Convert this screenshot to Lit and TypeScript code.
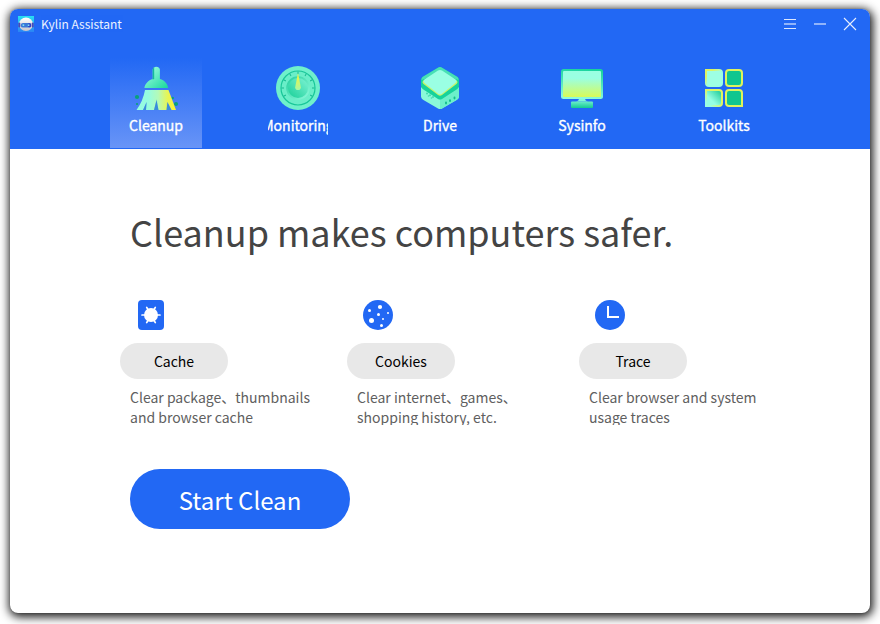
import { LitElement, html, css, svg } from "lit";
import { customElement, property } from "lit/decorators.js";

const logo = html`<svg width="16" height="16" viewBox="0 0 16 16">
  <defs><linearGradient id="lg" x1="0" y1="0" x2="0" y2="1"><stop offset="0" stop-color="#27e0f2"/><stop offset="1" stop-color="#2a83f5"/></linearGradient>
  <linearGradient id="lw" x1="0" y1="0" x2="0" y2="1"><stop offset="0" stop-color="#fff"/><stop offset="1" stop-color="#c9c5cb"/></linearGradient></defs>
  <rect width="16" height="16" fill="url(#lg)"/>
  <ellipse cx="8" cy="8.2" rx="7" ry="6.7" fill="url(#lw)"/>
  <rect x="0.3" y="6.5" width="2" height="5" rx="1" fill="#4a49b8"/><rect x="13.7" y="6.5" width="2" height="5" rx="1" fill="#4a49b8"/>
  <rect x="2.8" y="7" width="10.4" height="4.6" rx="2.2" fill="#3a78d8"/>
  <rect x="10" y="7.2" width="3" height="4" rx="1.200" fill="#2f3fc8"/>
  <rect x="4.6" y="8.4" width="1.600" height="1.600" fill="#7fe4f4"/><rect x="9.8" y="8.4" width="1.600" height="1.600" fill="#7fe4f4"/>
</svg>`;

const broom = html`<svg width="48" height="48" viewBox="0 0 48 48">
  <defs><linearGradient id="bh" x1="0" y1="0" x2="1" y2="1"><stop offset=".2" stop-color="#8ff9d8"/><stop offset="1" stop-color="#16d79d"/></linearGradient>
  <linearGradient id="bb" x1="0" y1="0" x2="1" y2="0"><stop offset=".3" stop-color="#95fce0"/><stop offset=".55" stop-color="#b4fab8"/><stop offset=".78" stop-color="#e5f557"/><stop offset="1" stop-color="#fdf02d"/></linearGradient></defs>
  <g fill="#08a17b"><circle cx="5" cy="33" r="2.1"/><circle cx="5" cy="40" r="1.1"/><circle cx="40.7" cy="34" r="1.2"/><circle cx="44" cy="40" r="2.1"/></g>
  <path d="M20.7 5.5a3.7 3.7 0 0 1 7.2 0V15c4.500 1 8 5 8.200 9H12.400c.4-4 4-8 8.300-9z" fill="url(#bh)"/>
  <path d="M20.7 5.500q.5-2 1.500-2.500v12l-1.500.5z" fill="#15b99c"/>
  <path d="M13 26H36.500L44 46H39.500L35.500 38L34.500 46H26.500L24.500 36L22 46H14L14.500 38L11 46H4.500Q11 37 13 26Z" fill="url(#bb)"/>
  <path d="M15 38L11 46H14zM24.700 35L22 46h4.500zM35 38l-.5 8h5z" fill="#18a99e" opacity=".3"/>
</svg>`;

const gauge = html`<svg width="48" height="48" viewBox="0 0 48 48">
  <defs><linearGradient id="gr" x1="0" y1="0" x2="1" y2="1"><stop stop-color="#23ce9c"/><stop offset="1" stop-color="#8ffbdc"/></linearGradient>
  <linearGradient id="gk" x1="1" y1="0" x2="0" y2="1"><stop offset=".1" stop-color="#74efcd"/><stop offset="1" stop-color="#18cf98"/></linearGradient>
  <linearGradient id="gn" x1="0" y1="0" x2="0" y2="1"><stop stop-color="#fff32c"/><stop offset="1" stop-color="#a8f8a5"/></linearGradient></defs>
  <circle cx="24" cy="24" r="22" fill="#6ff0cb"/>
  <circle cx="24" cy="24" r="17" fill="#6aeec8" stroke="#18c698" stroke-width="1.200"/>
  <g stroke="#18ba91" stroke-width="1">${Array.from({ length: 9 }, (_, i) => svg`<path d="M24 7.500v2.500" transform=${`rotate(${i * 30 - 120} 24 24)`}/>`)}</g>
  <circle cx="24" cy="24" r="11.800" fill="url(#gr)"/>
  <circle cx="24" cy="24" r="10" fill="url(#gk)"/>
  <path d="M24 9L21.200 23.300a2.800 2.800 0 1 0 5.600 0z" fill="url(#gn)"/>
</svg>`;

const drive = html`<svg width="48" height="48" viewBox="0 0 48 48">
  <path d="M5 23L24 30L43 23V32.500Q43 34.500 41 35.700L26 44.500Q24 45.500 22 44.500L7 35.700Q5 34.500 5 32.500Z" fill="#8af9d9"/>
  <path d="M24 32L43 23V32.500Q43 34.500 41 35.700L26 44.500Q25 45 24 45Z" fill="#6cf0ca"/>
  <path d="M22 3.700Q24 2.500 26 3.700L41.500 13Q43 14 43 16V22Q43 24 41 25.200L26 35Q24 36.200 22 35L7 25.200Q5 24 5 22V16Q5 14 6.500 13Z" fill="#16d29b"/>
  <path d="M22 3.700Q24 2.500 26 3.700L41.500 13Q42.500 14 42.500 16L24 10L5.500 16Q5.500 14 6.500 13Z" fill="#48e0b5"/>
  <path d="M22 8Q24 6.500 26 8L40.500 16.500Q42.500 18 40.500 20L26 31Q24 32.500 22 31L7.500 20Q5.500 18 7.500 16.500Z" fill="#c8f36b"/>
  <path d="M22 6.500Q24 5.500 26 6.500L39.500 15.500Q41.500 17 39.500 19L26 29.700Q24 31.200 22 29.700L8.500 19Q6.500 17 8.500 15.500Z" fill="#9affe3"/>
  <g fill="#13bd8d"><ellipse cx="30" cy="39" rx="1" ry="1.400"/><ellipse cx="34" cy="36.700" rx="1" ry="1.400"/><ellipse cx="38.500" cy="34" rx="1" ry="1.400"/></g>
  <g fill="#25cd9c" opacity=".7"><circle cx="11" cy="29.500" r="1"/><circle cx="14" cy="31.300" r="1"/><circle cx="17" cy="33" r="1"/><circle cx="12.500" cy="32" r=".8"/><circle cx="15.500" cy="34" r=".8"/></g>
</svg>`;

const monitor = html`<svg width="48" height="48" viewBox="0 0 48 48">
  <defs><linearGradient id="ms" x1="0" y1="0" x2="0" y2="1"><stop offset=".28" stop-color="#9affe2"/><stop offset="1" stop-color="#d9fb57"/></linearGradient>
  <linearGradient id="mf" x1=".7" y1="0" x2=".55" y2="1"><stop stop-color="#16d39c"/><stop offset="1" stop-color="#8dfbdd"/></linearGradient>
  <linearGradient id="mb" x1="0" y1="0" x2="0" y2="1"><stop stop-color="#6bedcb"/><stop offset="1" stop-color="#14c992"/></linearGradient></defs>
  <path d="M21 34h6q0 3 3 3.500H18q3-.5 3-3.500z" fill="#83f5d9"/>
  <rect x="3" y="5" width="42" height="30" rx="2.500" fill="url(#mf)"/>
  <rect x="5" y="7" width="38" height="26" rx="1" fill="url(#ms)"/>
  <rect x="13" y="37.500" width="22" height="6.500" rx="1" fill="url(#mb)"/>
</svg>`;

const tiles = html`<svg width="48" height="48" viewBox="0 0 48 48">
  <defs><linearGradient id="tg" x1="0" y1="1" x2="1" y2="0"><stop offset=".35" stop-color="#95ffe2"/><stop offset="1" stop-color="#12c690"/></linearGradient>
  <linearGradient id="ty" x1="0" y1="0" x2="1" y2="1"><stop offset=".2" stop-color="#dff462"/><stop offset=".55" stop-color="#9dffdf"/></linearGradient>
  <linearGradient id="tz" x1="0" y1="1" x2=".65" y2=".35"><stop offset=".2" stop-color="#9dffdf"/><stop offset=".8" stop-color="#dff462"/></linearGradient></defs>
  <g stroke-width="2">
  <path d="M6 6H19Q22 6 22 9V19Q22 22 19 22H9Q6 22 6 19Z" fill="#9dffe3" stroke="url(#ty)"/>
  <path d="M29 6H39Q42 6 42 9V19Q42 22 39 22H29Q26 22 26 19V9Q26 6 29 6Z" fill="#10c68f" stroke="#dff35c"/>
  <path d="M6 26H19Q22 26 22 29V39Q22 42 19 42H6Z" fill="url(#tg)" stroke="url(#tz)"/>
  <path d="M29 26H39Q42 26 42 29V42H29Q26 42 26 39V29Q26 26 29 26Z" fill="#10c68f" stroke="#dff35c"/>
  </g>
</svg>`;

const cacheIcon = html`<svg width="26" height="30" viewBox="0 0 26 30"><rect width="26" height="30" rx="4" fill="#2268f4"/>
  <circle cx="13" cy="15" r="7" fill="#fff"/>
  <g stroke="#fff" stroke-width="1.700" stroke-linecap="round"><path d="M4 15H22M8.700 7.400L17.300 22.600M17.300 7.400L8.700 22.600"/></g></svg>`;

const cookieIcon = html`<svg width="30" height="30" viewBox="0 0 30 30"><circle cx="15" cy="15" r="15" fill="#2268f4"/>
  <g fill="#fff"><circle cx="17" cy="7" r="2.100"/><circle cx="6.500" cy="10.500" r="1.500"/><circle cx="15.500" cy="14.500" r="1.500"/><circle cx="25" cy="13" r="1"/><circle cx="8.500" cy="20.500" r="2.500"/><circle cx="20" cy="19" r="1"/><circle cx="18.500" cy="25.500" r="1.500"/></g></svg>`;

const traceIcon = html`<svg width="30" height="30" viewBox="0 0 30 30"><circle cx="15" cy="15" r="15" fill="#2268f4"/>
  <path d="M13 6V17H24" fill="none" stroke="#fff" stroke-width="2"/></svg>`;

@customElement("nav-tab")
export class NavTab extends LitElement {
  @property() label = "";
  @property({ attribute: false }) icon: unknown;
  static styles = css`
    :host { display: flex; flex-direction: column; align-items: center; width: 92px; height: 90px; padding-top: 6px; box-sizing: border-box; }
    :host([active]) { background: linear-gradient(#2268f4, #6894f7); }
    svg { display: block; }
    .label { width: 60px; height: 24px; margin-top: 1px; overflow: hidden; display: flex; justify-content: center; font-size: 14px; line-height: 24px; font-weight: 400; color: #fff; -webkit-text-stroke: 0.35px #fff; white-space: nowrap; }
  `;
  render() {
    return html`${this.icon}<div class="label"><span>${this.label}</span></div>`;
  }
}

@customElement("clean-item")
export class CleanItem extends LitElement {
  @property() label = "";
  @property({ attribute: false }) lines: string[] = [];
  @property({ attribute: false }) icon: unknown;
  static styles = css`
    :host { display: block; }
    .icon { display: flex; height: 30px; padding-left: 16px; }
    :host([narrow]) .icon { padding-left: 18px; }
    button { display: block; width: 108px; height: 36px; margin-top: 13px; padding: 1px 0 0; border: 0; border-radius: 18px; background: #e8e8e8; color: #000; font: 400 14px/35px "Noto Sans CJK SC", sans-serif; }
    .text { height: 38px; margin: 8px 0 0 10px; overflow: hidden; font-size: 14px; line-height: 20px; color: #606060; white-space: nowrap; }
  `;
  render() {
    return html`<div class="icon">${this.icon}</div>
      <button>${this.label}</button>
      <div class="text">${this.lines.map((l) => html`<div>${l}</div>`)}</div>`;
  }
}

@customElement("app-root")
export class AppRoot extends LitElement {
  static styles = css`
    :host { display: block; box-sizing: border-box; width: 880px; height: 624px; padding: 9px 10px 10px; overflow: hidden; background: #fff; font-family: "Noto Sans CJK SC", sans-serif; }
    .window { height: 604px; box-sizing: border-box; border-radius: 8px; background: #fff; overflow: hidden; box-shadow: 0 0 1px 0 rgba(0, 0, 0, 0.4), 1px 2px 10px 2px rgba(0, 0, 0, 0.9); }
    header { height: 140px; background: #2268f4; }
    .bar { display: flex; align-items: center; height: 30px; padding: 0 13px 0 8px; }
    .title { flex: 1; margin-left: 7px; font-size: 12px; line-height: 30px; color: #fff; opacity: 0.92; }
    .controls { display: flex; gap: 16px; }
    nav { display: flex; gap: 50px; margin: 19px 0 0 100px; }
    h1 { margin: 52px 0 0 120px; font-size: 36px; line-height: 60px; font-weight: 400; color: #444; white-space: nowrap; }
    .items { display: grid; grid-template-columns: 227px 232px 200px; margin: 39px 0 0 110px; }
    .start { display: block; width: 220px; height: 60px; margin: 44px 0 0 120px; padding: 1px 0 0; border: 0; border-radius: 30px; background: #2268f4; color: #fff; font: 400 24px/59px "Noto Sans CJK SC", sans-serif; }
  `;
  render() {
    return html`<div class="window">
      <header>
        <div class="bar">
          ${logo}<span class="title">Kylin Assistant</span>
          <div class="controls">
            <svg width="14" height="14" viewBox="0 0 14 14"><path d="M1 2.500h12M1 11.500h12" stroke="#dde8fe"/><path d="M1 7h12" stroke="#91b4fa" stroke-width="2"/></svg>
            <svg width="14" height="14" viewBox="0 0 14 14"><path d="M1 7h12" stroke="#91b4fa" stroke-width="2"/></svg>
            <svg width="14" height="14" viewBox="0 0 14 14"><path d="M1 1l12 12M13 1L1 13" stroke="#e6eefe" stroke-width="1.100"/></svg>
          </div>
        </div>
        <nav>
          <nav-tab active label="Cleanup" .icon=${broom}></nav-tab>
          <nav-tab label="Monitoring" .icon=${gauge}></nav-tab>
          <nav-tab label="Drive" .icon=${drive}></nav-tab>
          <nav-tab label="Sysinfo" .icon=${monitor}></nav-tab>
          <nav-tab label="Toolkits" .icon=${tiles}></nav-tab>
        </nav>
      </header>
      <main>
        <h1>Cleanup makes computers safer.</h1>
        <div class="items">
          <clean-item narrow label="Cache" .icon=${cacheIcon} .lines=${["Clear package、thumbnails", "and browser cache"]}></clean-item>
          <clean-item label="Cookies" .icon=${cookieIcon} .lines=${["Clear internet、games、", "shopping history, etc."]}></clean-item>
          <clean-item label="Trace" .icon=${traceIcon} .lines=${["Clear browser and system", "usage traces"]}></clean-item>
        </div>
        <button class="start">Start Clean</button>
      </main>
    </div>`;
  }
}
